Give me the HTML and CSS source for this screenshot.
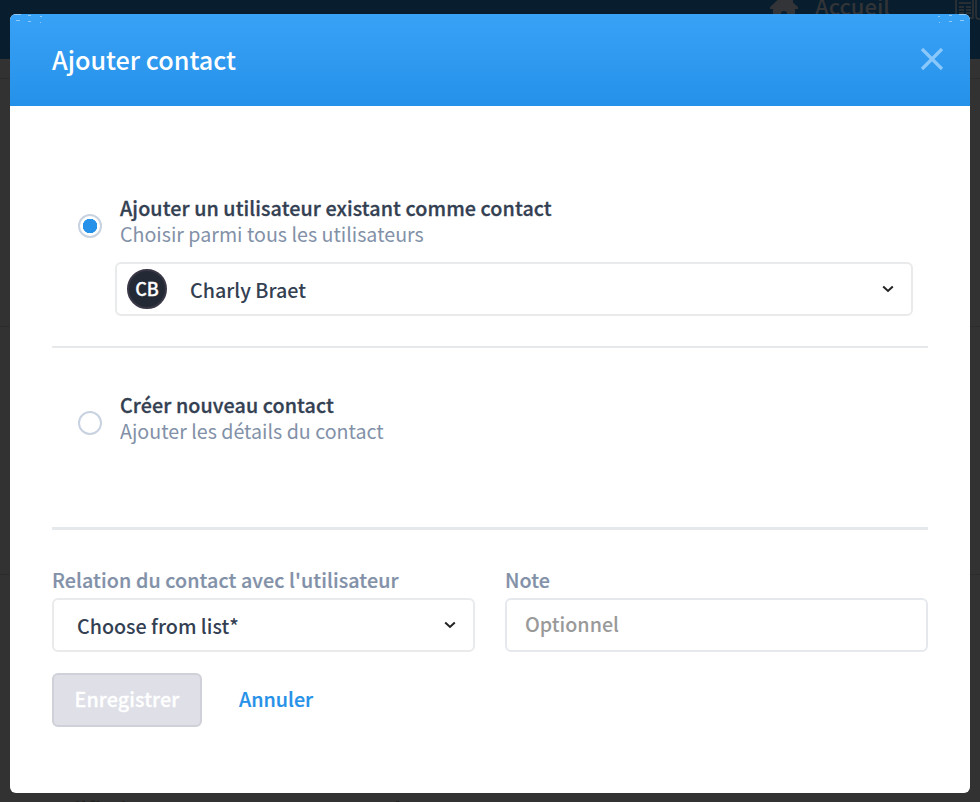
FILE: index.html
```html
<!DOCTYPE html>
<html lang="fr">
<head>
  <meta charset="UTF-8">
  <meta name="viewport" content="width=device-width, initial-scale=1.0">
  <title>Ajouter contact</title>
  <link rel="stylesheet" href="styles.css">
</head>
<body>
  <!-- Page behind the modal -->
  <div class="page">
    <nav class="topbar">
      <svg class="nav-home" viewBox="0 0 28 26"><path d="M14 0L0 13v2h3v11h8v-6a3 3 0 0 1 6 0v6h8V15h3v-2l-5-4.500V2h-4v3z"/></svg>
      <span>Accueil</span>
      <svg class="nav-news" viewBox="0 0 30 20"><path d="M1 0v18h17V0M21 0v16q0 3 3 3h6M26 0v15"/><path d="M4 3h12M4 7h5M11 7h5M4 10h5M11 10h5M4 13h5M11 13h5"/></svg>
    </nav>
    <div class="page-body">
      <div class="page-row"></div>
      <div class="page-row"></div>
      <div class="page-row"></div>
      <div class="page-row"></div>
    </div>
    <div class="page-columns">
      <span>Modified</span>
      <span>Personnel</span>
    </div>
  </div>

  <div class="modal">
    <header class="modal-header">
      <svg class="corner" viewBox="0 0 34 10"><path d="M4 .5h7M6 6.500h4M18 1.500h3M18 7.500h3M30 2.500h2M30 8.500h1"/></svg>
      <svg class="corner corner-right" viewBox="0 0 34 10"><path d="M4 .5h7M6 6.500h4M18 1.500h3M18 7.500h3M30 2.500h2M30 8.500h1"/></svg>
      <h1>Ajouter contact</h1>
      <svg class="close" viewBox="0 0 22 22"><path d="M1 1l20 20M21 1L1 21"/></svg>
    </header>

    <form class="modal-body">
      <section class="option option-existing">
        <span class="radio checked"></span>
        <div class="option-text">
          <h2>Ajouter un utilisateur existant comme contact</h2>
          <p>Choisir parmi tous les utilisateurs</p>
        </div>
      </section>
      <div class="field user-select">
        <span class="avatar">CB</span>
        <span class="value">Charly Braet</span>
        <svg class="chevron" viewBox="0 0 12 8"><path d="M1.200 1.500L6 6l4.800-4.500"/></svg>
      </div>

      <section class="option option-new">
        <span class="radio"></span>
        <div class="option-text">
          <h2>Créer nouveau contact</h2>
          <p>Ajouter les détails du contact</p>
        </div>
      </section>

      <div class="fields">
        <div class="group">
          <label>Relation du contact avec l'utilisateur</label>
          <div class="field relation">
            <span class="value">Choose from list*</span>
            <svg class="chevron" viewBox="0 0 12 8"><path d="M1.200 1.500L6 6l4.800-4.500"/></svg>
          </div>
        </div>
        <div class="group">
          <label>Note</label>
          <div class="field note">
            <span class="placeholder">Optionnel</span>
          </div>
        </div>
      </div>

      <div class="actions">
        <button type="button" class="save" disabled>Enregistrer</button>
        <a class="cancel">Annuler</a>
      </div>
    </form>
  </div>
</body>
</html>
```

FILE: styles.css
```css
* {
  box-sizing: border-box;
}
body {
  margin: 0;
  height: 802px;
  overflow: hidden;
  position: relative;
  font-family: "Noto Sans CJK JP", "Noto Sans", sans-serif;
  font-size: 19.7px;
  font-weight: 500;
  color: #334052;
  background: #323232;
}
h1, h2, p {
  margin: 0;
}
.page {
  height: 802px;
  overflow: hidden;
}
.topbar {
  height: 59px;
  background: #081e2e;
  display: flex;
  align-items: flex-start;
  padding-left: 770px;
  color: #323437;
  font-size: 22px;
  line-height: 11px;
}
.topbar svg {
  flex: none;
}
.nav-home {
  width: 28px;
  height: 26px;
  margin: -6px 17px 0 0;
  fill: #323437;
}
.nav-news {
  width: 30px;
  height: 20px;
  margin-left: 65px;
  fill: none;
  stroke: #323437;
  stroke-width: 1.5;
}
.page-body {
  height: 739px;
}
.page-row {
  height: 20px;
  border-bottom: 1px solid #2c2c2c;
}
.page-row + .page-row {
  height: 248px;
}
.page-columns {
  display: grid;
  grid-template-columns: 261px 1fr;
  padding-left: 36px;
  font-size: 21px;
  font-weight: 700;
  line-height: 22px;
  color: #222;
}

/* Modal */
.modal {
  position: absolute;
  top: 14px;
  left: 10px;
  width: 960px;
  height: 779px;
  background: #fff;
  border-radius: 6px;
  overflow: hidden;
}
.modal-header {
  position: relative;
  height: 92px;
  padding: 0 27px 2px 42px;
  display: flex;
  align-items: center;
  justify-content: space-between;
  background: linear-gradient(to bottom, #38a2f7, #2591e8);
  color: #fff;
}
.modal-header h1 {
  font-size: 25.2px;
  font-weight: 500;
}
.corner {
  position: absolute;
  top: 0;
  left: 0;
  width: 34px;
  height: 10px;
  stroke: #8fcaf9;
}
.corner-right {
  left: auto;
  right: 0;
  transform: scaleX(-1);
}
.close {
  width: 22px;
  height: 22px;
  fill: none;
  stroke: #8ac7fa;
  stroke-width: 3.2;
  overflow: visible;
}
.modal-body {
  padding: 89px 42px 0;
}
.option {
  display: flex;
  align-items: center;
  height: 52px;
  padding-left: 26px;
}
.option h2, .option p {
  line-height: 26px;
}
.option h2 {
  font-size: 19.7px;
  font-weight: 500;
  letter-spacing: 0.1px;
  -webkit-text-stroke: 0.3px;
}
.option p {
  font-size: 19.65px;
  font-weight: 400;
  color: #8291a8;
}
.radio {
  width: 24px;
  height: 24px;
  margin: 10px 18px 0 0;
  border: 2px solid #c8d2e0;
  border-radius: 50%;
  flex: none;
}
.radio.checked {
  background: radial-gradient(circle, #2591e8 7px, #fff 7.5px);
}
.field {
  height: 54px;
  border: 2px solid #e9eaeb;
  border-radius: 6px;
  display: flex;
  align-items: center;
}
.value {
  flex: 1;
}
.chevron {
  width: 12px;
  height: 8px;
  fill: none;
  stroke: #222;
  stroke-width: 2;
}
.user-select {
  margin: 15px 15px 0 63px;
  padding: 0 17px 0 10px;
}
.avatar {
  width: 40px;
  height: 40px;
  margin-right: 23px;
  border: 2px solid #3a3746;
  border-radius: 50%;
  background: #232a36;
  color: #fff;
  font-size: 18px;
  line-height: 35px;
  text-align: center;
  -webkit-text-stroke: 0.3px;
}
.option-new {
  height: 184px;
  margin-top: 30px;
  padding-top: 44px;
  align-items: flex-start;
  border-top: 2px solid #e5e9ec;
  border-bottom: 3px solid #e5e9ec;
}
.option-new .radio {
  margin-top: 19px;
}
.fields {
  display: grid;
  grid-template-columns: 1fr 1fr;
  gap: 30px;
  margin-top: 37px;
}
.group label {
  display: block;
  height: 31px;
  line-height: 26px;
  letter-spacing: 0.1px;
  color: #8291a8;
  -webkit-text-stroke: 0.2px;
}
.relation {
  padding: 0 17px 0 23px;
}
.note {
  padding: 0 0 4px 18px;
  border-color: #e5e9ee;
}
.placeholder {
  color: #999;
}
.actions {
  display: flex;
  align-items: center;
  margin-top: 21px;
}
.save {
  width: 150px;
  height: 54px;
  padding: 0 0 4px;
  font: inherit;
  color: #fff;
  background: #dedfe7;
  border: 2px solid #d0d1d8;
  border-radius: 6px;
  -webkit-text-stroke: 0.3px;
  letter-spacing: 0.1px;
}
.cancel {
  margin-left: 37px;
  padding-bottom: 4px;
  color: #2591e8;
  -webkit-text-stroke: 0.2px;
}
```
